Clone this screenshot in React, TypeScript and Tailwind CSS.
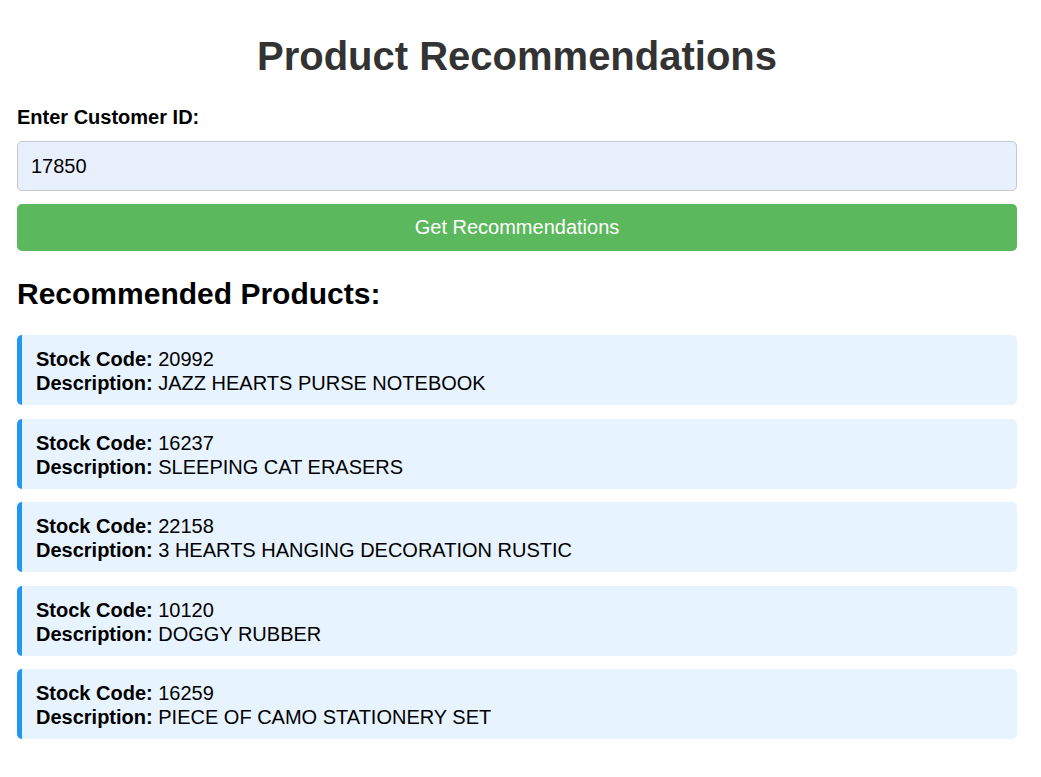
import React, { useState } from "react"

interface Product {
  stockCode: string
  description: string
}

const products: Product[] = [
  { stockCode: "20992", description: "JAZZ HEARTS PURSE NOTEBOOK" },
  { stockCode: "16237", description: "SLEEPING CAT ERASERS" },
  { stockCode: "22158", description: "3 HEARTS HANGING DECORATION RUSTIC" },
  { stockCode: "10120", description: "DOGGY RUBBER" },
  { stockCode: "16259", description: "PIECE OF CAMO STATIONERY SET" },
]

export default function App() {
  const [customerId, setCustomerId] = useState("17850")

  return (
    <div className="min-h-screen bg-white font-['Liberation_Sans',Arial,sans-serif] text-[20px] text-black">
      <div className="ml-[17px] w-[1000px] pt-[33px] pb-8">
        <h1 className="text-center text-[40px] font-bold leading-[46px] text-[#333]">
          Product Recommendations
        </h1>

        <label htmlFor="customer" className="mt-[27px] block font-bold leading-[23px]">
          Enter Customer ID:
        </label>
        <input
          id="customer"
          value={customerId}
          onChange={(e) => setCustomerId(e.target.value)}
          className="mt-[12px] block h-[50px] w-full rounded-[5px] border border-[#c8c8cc] bg-[#e8f0fe] px-[13px] text-[20px] leading-[23px] text-black outline-none"
        />
        <button className="mt-[13px] block h-[47px] w-full rounded-[5px] bg-[#5cb85c] text-[20px] leading-[23px] text-white">
          Get Recommendations
        </button>

        <h2 className="mt-[26px] text-[30px] font-bold leading-[34px]">
          Recommended Products:
        </h2>

        <div className="mt-[24px] flex flex-col gap-[13.5px]">
          {products.map((p) => (
            <div
              key={p.stockCode}
              className="h-[70px] rounded-[5px] border-l-[5px] border-[#2196f3] bg-[#e7f3fe] px-[14px] pt-[12px] pb-[10px] leading-[24px]"
            >
              <div>
                <span className="font-bold">Stock Code:</span> {p.stockCode}
              </div>
              <div>
                <span className="font-bold">Description:</span> {p.description}
              </div>
            </div>
          ))}
        </div>
      </div>
    </div>
  )
}
